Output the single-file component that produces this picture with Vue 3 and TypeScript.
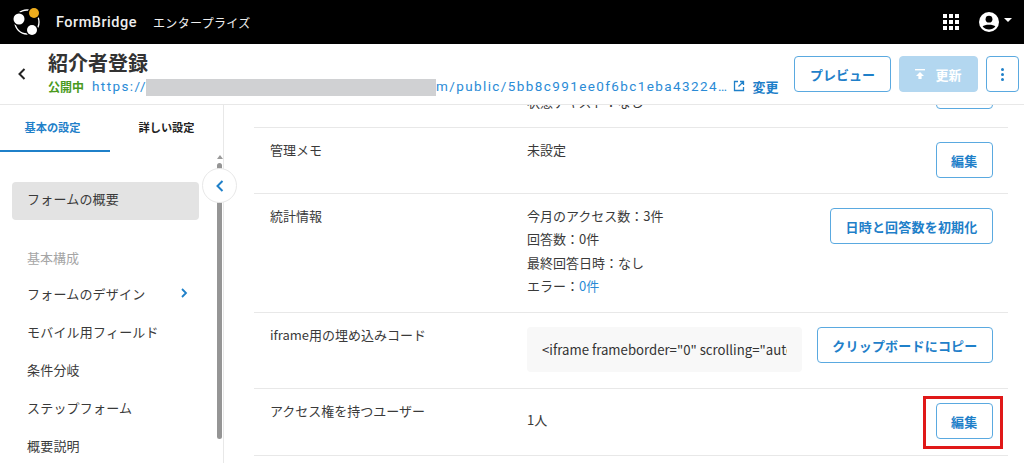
<template>
<div class="page">
  <header class="topbar">
    <svg class="topbar__logo" width="30" height="30" viewBox="0 0 30 30">
      <circle cx="16" cy="15" r="12" fill="none" stroke="#fff" stroke-width="1.3"/>
      <circle cx="23" cy="6" r="5" fill="#edac1d" stroke="#000" stroke-width="3" paint-order="stroke"/>
      <circle cx="8" cy="12" r="5.5" fill="#fff" stroke="#000" stroke-width="3" paint-order="stroke"/>
      <circle cx="21" cy="23" r="5" fill="#fff" stroke="#000" stroke-width="3" paint-order="stroke"/>
    </svg>
    <span class="topbar__brand">FormBridge</span>
    <span class="topbar__plan">エンタープライズ</span>
    <div class="topbar__right">
      <svg width="16" height="16" viewBox="0 0 16 16" fill="#fff">
        <template v-for="y in [0, 6, 12]" :key="y">
          <rect v-for="x in [0, 6, 12]" :key="x" :x="x" :y="y" width="4" height="4"/>
        </template>
      </svg>
      <svg class="topbar__account" width="22" height="22" viewBox="0 0 22 22">
        <circle cx="11" cy="11" r="10" fill="#fff"/>
        <circle cx="11" cy="8.2" r="3.4" fill="#000"/>
        <path d="M4.6 15.6C6.4 13 15.6 13 17.4 15.6C15.8 17.6 13.5 18.6 11 18.6C8.5 18.6 6.2 17.6 4.6 15.6Z" fill="#000"/>
      </svg>
      <span class="topbar__caret"></span>
    </div>
  </header>

  <div class="subbar">
    <svg class="subbar__back" width="10" height="14" viewBox="0 0 10 14">
      <path d="M7.5 2L2.5 7L7.5 12" fill="none" stroke="#222" stroke-width="2"/>
    </svg>
    <div class="subbar__info">
      <h1 class="subbar__title">紹介者登録</h1>
      <div class="subbar__meta">
        <span class="subbar__status">公開中</span>
        <span class="subbar__url">https://<span class="subbar__mask"></span>m/public/5bb8c991ee0f6bc1eba43224…</span>
        <svg class="subbar__ext" width="12" height="12" viewBox="0 0 12 12">
          <path d="M5 1.5H1.5V10.5H10.5V7M7 1.5H10.5V5M10.5 1.5L5.5 6.5" fill="none" stroke="#1f80c9" stroke-width="1.3"/>
        </svg>
        <a class="subbar__change">変更</a>
      </div>
    </div>
    <div class="subbar__actions">
      <button class="btn btn--preview">プレビュー</button>
      <button class="btn btn--update">
        <svg width="10" height="12" viewBox="0 0 10 12" fill="#fff">
          <rect x="0" y="1" width="10" height="1.4"/>
          <path d="M5 4L9 8H6.6V11H3.4V8H1Z"/>
        </svg>
        更新
      </button>
      <button class="btn btn--more">
        <span></span><span></span><span></span>
      </button>
    </div>
  </div>

  <div class="body">
    <aside class="side">
      <div class="side__tabs">
        <div class="side__tab side__tab--active">基本の設定</div>
        <div class="side__tab side__tab--other">詳しい設定</div>
      </div>
      <nav class="side__nav">
        <div class="side__current">フォームの概要</div>
        <div class="side__group">基本構成</div>
        <div v-for="item in navItems" :key="item" class="side__item">
          {{ item }}
          <svg v-if="item === 'フォームのデザイン'" width="8" height="10" viewBox="0 0 8 10">
            <path d="M2 1L6 5L2 9" fill="none" stroke="#1f80c9" stroke-width="1.8"/>
          </svg>
        </div>
      </nav>
      <div class="side__scroll">
        <span class="side__arrow"></span>
        <span class="side__thumb"></span>
      </div>
      <button class="side__collapse">
        <svg width="10" height="14" viewBox="0 0 10 14">
          <path d="M7.5 2L2.5 7L7.5 12" fill="none" stroke="#1f80c9" stroke-width="2"/>
        </svg>
      </button>
    </aside>

    <main class="main">
      <div class="rows">
        <section class="row row--cut">
          <div class="row__label"></div>
          <div class="row__value row__value--cut">状態テキスト：なし</div>
          <button class="btn btn--row">編集</button>
        </section>
        <section class="row">
          <div class="row__label">管理メモ</div>
          <div class="row__value">未設定</div>
          <button class="btn btn--row">編集</button>
        </section>
        <section class="row">
          <div class="row__label">統計情報</div>
          <div class="row__value row__value--stats">
            <div>今月のアクセス数：3件</div>
            <div>回答数：0件</div>
            <div>最終回答日時：なし</div>
            <div>エラー：<a class="row__link">0件</a></div>
          </div>
          <button class="btn btn--row">日時と回答数を初期化</button>
        </section>
        <section class="row row--tall">
          <div class="row__label">iframe用の埋め込みコード</div>
          <div class="row__code"><span>&lt;iframe frameborder="0" scrolling="auto"</span></div>
          <button class="btn btn--row">クリップボードにコピー</button>
        </section>
        <section class="row row--tall">
          <div class="row__label">アクセス権を持つユーザー</div>
          <div class="row__value row__value--center">1人</div>
          <div class="row__mark">
            <button class="btn btn--row">編集</button>
          </div>
        </section>
      </div>
    </main>
  </div>
</div>
</template>

<script setup lang="ts">
const navItems: string[] = [
  'フォームのデザイン',
  'モバイル用フィールド',
  '条件分岐',
  'ステップフォーム',
  '概要説明',
];
</script>

<style>
html, body {
  margin: 0;
  overflow: hidden;
}
</style>

<style scoped>
.page {
  display: flex;
  flex-direction: column;
  width: 1024px;
  height: 463px;
  overflow: hidden;
  background: #fff;
  color: #3a3a3a;
  font-family: "Noto Sans CJK JP", "Noto Sans", sans-serif;
  font-size: 13px;
}
.topbar {
  display: flex;
  align-items: center;
  flex: none;
  height: 44px;
  padding: 0 12px 0 11px;
  box-sizing: border-box;
  background: #000;
  color: #fff;
}
.topbar__logo {
  margin-right: 15px;
}
.topbar__brand {
  font-family: Roboto, sans-serif;
  font-weight: 500;
  font-size: 14.5px;
  letter-spacing: 0.5px;
  color: #eee;
}
.topbar__plan {
  margin-left: 16px;
  font-size: 12px;
  letter-spacing: 0.35px;
  color: #eee;
}
.topbar__right {
  display: flex;
  align-items: center;
  margin-left: auto;
}
.topbar__account {
  margin-left: 19px;
}
.topbar__caret {
  margin-left: 4px;
  margin-bottom: 4px;
  border-left: 4px solid transparent;
  border-right: 4px solid transparent;
  border-top: 4px solid #fff;
}
.subbar {
  display: flex;
  align-items: center;
  flex: none;
  height: 61px;
  box-sizing: border-box;
  border-bottom: 1px solid #e8e8e8;
  padding: 0 5px 0 17px;
}
.subbar__back {
  margin-right: 21px;
}
.subbar__info {
  flex: 1;
  min-width: 0;
  padding-top: 2px;
}
.subbar__title {
  margin: -3px 0 0;
  font-size: 20px;
  line-height: 24px;
  font-weight: 700;
  color: #333;
}
.subbar__meta {
  display: flex;
  align-items: center;
  height: 20px;
  margin-top: 1px;
}
.subbar__status {
  width: 44px;
  font-size: 12px;
  font-weight: 700;
  color: #4a9a1e;
}
.subbar__url {
  display: flex;
  align-items: center;
  font-family: Roboto, sans-serif;
  font-size: 13.5px;
  letter-spacing: 1.4px;
  color: #2a8bd6;
  white-space: nowrap;
}
.subbar__mask {
  display: block;
  width: 290px;
  height: 17px;
  margin-top: 2px;
  margin-left: -1px;
  background: #d0d1d3;
}
.subbar__ext {
  margin-left: 5px;
}
.subbar__change {
  margin-left: 7px;
  font-size: 13px;
  font-weight: 700;
  color: #1f80c9;
}
.subbar__actions {
  display: flex;
  gap: 8px;
}
.btn {
  display: flex;
  align-items: center;
  justify-content: center;
  height: 36px;
  box-sizing: border-box;
  padding: 0;
  border: 1px solid #5aa9e0;
  border-radius: 4px;
  background: #fff;
  color: #1f80c9;
  font-family: inherit;
  font-size: 13px;
  font-weight: 700;
}
.btn--preview {
  width: 97px;
}
.btn--update {
  gap: 10px;
  width: 79px;
  border-color: #b3d7f0;
  background: #b3d7f0;
  color: #fff;
}
.btn--more {
  flex-direction: column;
  gap: 2px;
  width: 33px;
}
.btn--more span {
  width: 3px;
  height: 3px;
  border-radius: 50%;
  background: #1f80c9;
}
.btn--row {
  flex: none;
  padding: 0 14.5px;
  letter-spacing: 0.2px;
}
.body {
  display: flex;
  flex: 1;
  min-height: 0;
}
.side {
  position: relative;
  flex: none;
  width: 224px;
  box-sizing: border-box;
  border-right: 1px solid #e8e8e8;
}
.side__tabs {
  display: flex;
  width: 220px;
  height: 47px;
}
.side__tab {
  display: flex;
  align-items: center;
  justify-content: center;
  width: 110px;
  box-sizing: border-box;
  font-size: 11.2px;
  font-weight: 700;
  color: #222;
}
.side__tab--active {
  padding: 0 5px 2px 0;
  border-bottom: 2px solid #1f80c9;
  color: #1f80c9;
}
.side__tab--other {
  padding: 0 0 4px 3px;
}
.side__nav {
  padding: 30px 0 0 12px;
  width: 187px;
}
.side__current {
  display: flex;
  align-items: center;
  height: 38px;
  padding: 0 0 5px 15px;
  box-sizing: border-box;
  border-radius: 4px;
  background: #e3e3e3;
  color: #3a3a3a;
  letter-spacing: 0.2px;
}
.side__group {
  display: flex;
  align-items: center;
  height: 38px;
  margin-top: 18px;
  padding-left: 15px;
  color: #a5a5a5;
}
.side__item {
  position: relative;
  top: -2px;
  display: flex;
  align-items: center;
  justify-content: space-between;
  height: 38px;
  padding: 0 11px 0 15px;
  white-space: nowrap;
  letter-spacing: 0.2px;
}
.side__scroll {
  position: absolute;
  top: 47px;
  bottom: 0;
  right: 1px;
  width: 5px;
  display: flex;
  flex-direction: column;
  align-items: center;
}
.side__arrow {
  margin-top: 3px;
  border-left: 3px solid transparent;
  border-right: 3px solid transparent;
  border-bottom: 4px solid #9a9a9a;
}
.side__thumb {
  width: 5px;
  height: 276px;
  margin-top: 4px;
  border-radius: 3px;
  background: #959595;
}
.side__collapse {
  position: absolute;
  top: 63px;
  left: 202px;
  display: flex;
  align-items: center;
  justify-content: center;
  width: 35px;
  height: 35px;
  padding: 0;
  border: 1px solid #e8e8e8;
  border-radius: 50%;
  background: #fff;
}
.main {
  flex: 1;
  min-width: 0;
  overflow: hidden;
}
.rows {
  width: 754px;
  margin: -46px 0 0 30px;
}
.row {
  display: flex;
  align-items: flex-start;
  padding: 14px 15px 15px 16px;
  border-bottom: 1px solid #e8e8e8;
}
.row--cut {
  padding-bottom: 18px;
}
.row--tall {
  padding-bottom: 16px;
}
.row__label {
  flex: none;
  width: 257px;
  margin-top: -1px;
  line-height: 18px;
  color: #3a3a3a;
  white-space: nowrap;
}
.row__value {
  flex: 1;
  margin-top: -1px;
  line-height: 18px;
  color: #3a3a3a;
}
.row__value--cut {
  margin-top: 20px;
  margin-bottom: -2px;
}
.row__value--stats {
  margin-top: -4px;
  line-height: 23.3px;
}
.row__value--center {
  align-self: center;
  margin-top: -3px;
}
.row__link {
  color: #2a8bd6;
}
.row__code {
  flex: none;
  width: 275px;
  height: 45px;
  display: flex;
  align-items: center;
  box-sizing: border-box;
  padding: 0 15px;
  border-radius: 4px;
  background: #f8f8f8;
  font-size: 13.2px;
  color: #333;
}
.row__code span {
  display: block;
  overflow: hidden;
  white-space: nowrap;
}
.row > .btn--row,
.row__mark {
  margin-left: auto;
}
.row__mark {
  position: relative;
}
.row__mark::after {
  content: "";
  position: absolute;
  top: -7px;
  left: -13px;
  width: 80px;
  height: 53px;
  box-sizing: border-box;
  border: 3px solid #e01818;
}
</style>
